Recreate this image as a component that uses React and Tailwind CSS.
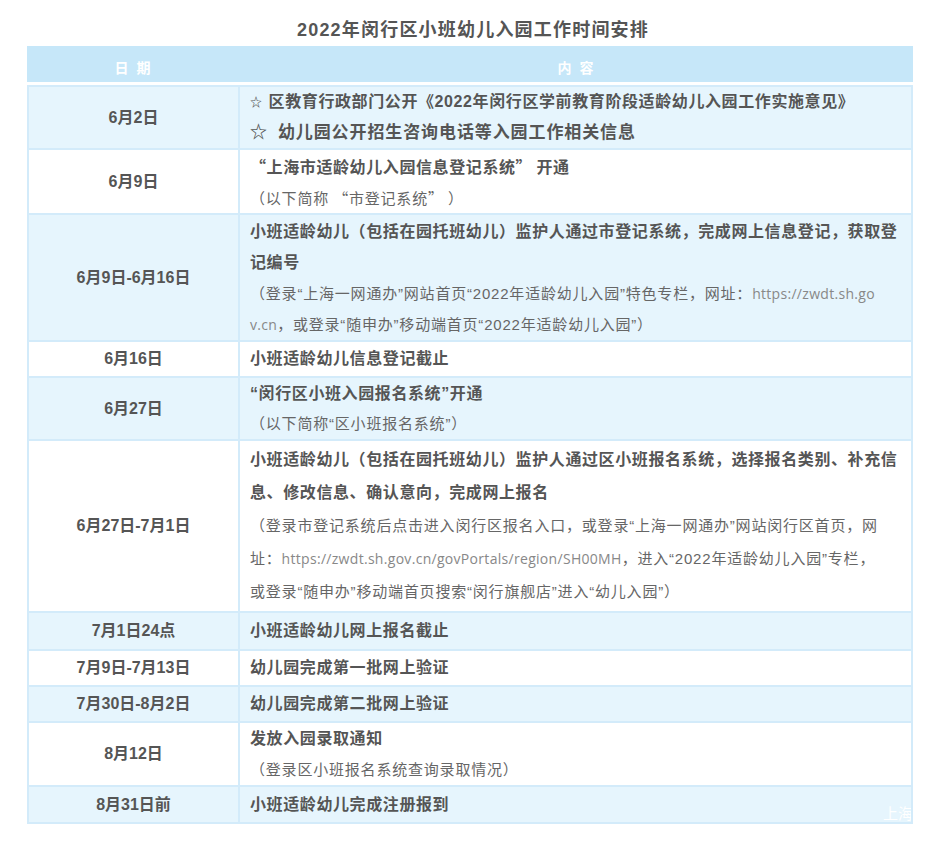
import React from "react";

const B = "font-bold text-[#555] text-[16px] tracking-[0.6px] whitespace-nowrap";
const N = "text-[#666] text-[15px] tracking-[0.8px] whitespace-nowrap";
const URL = "font-['Open_Sans'] text-[#888] text-[14px] tracking-[0.3px]";
const CJK = "font-['Noto_Sans_CJK_SC']";

function Row({ date, bg, pad, children, last }) {
  return (
    <div className={`relative grid grid-cols-[211px_1fr] border-b-2 border-[#d3ebfa] ${bg}`}>
      <div className="flex items-center justify-center border-r-2 border-[#d3ebfa] font-bold text-[16px] text-[#555]">
        {date}
      </div>
      <div className={`pl-[10px] pr-[6px] overflow-hidden relative ${pad}`}>
        {children}
        {last && (
          <span className="absolute left-[643px] bottom-[-2px] text-white text-[15px] leading-[20px] whitespace-nowrap">
            上海闵行
          </span>
        )}
      </div>
    </div>
  );
}

export default function App() {
  const light = "bg-[#e6f5fd]";
  const white = "bg-white";
  return (
    <div className="w-[944px] min-h-[846px] bg-white font-['Liberation_Sans','Noto_Sans_CJK_SC',sans-serif]">
      {/* title */}
      <h1 className="pt-[19px] h-[46px] text-center text-[18px] leading-[22px] font-bold text-[#555] tracking-[1.2px] pl-[2px]">
        2022年闵行区小班幼儿入园工作时间安排
      </h1>

      <div className="ml-[27px] w-[886px]">
        {/* header */}
        <div className="grid grid-cols-[213px_1fr] h-[36px] bg-[#c6e7f9] text-white font-bold text-[14px] leading-[20px]">
          <div className="pt-[12px] text-center tracking-[2px]">日&nbsp;期</div>
          <div className="pt-[12px] text-center tracking-[2px]">内&nbsp;容</div>
        </div>

        {/* body */}
        <div className="mt-[3px] border-x-2 border-t-2 border-[#d3ebfa]">
          <Row date="6月2日" bg={light} pad="leading-[30px]">
            <div className={B}>
              <span className="text-[12px] mr-[6px]">☆</span>区教育行政部门公开《2022年闵行区学前教育阶段适龄幼儿入园工作实施意见》
            </div>
            <div className="font-bold text-[#555] text-[17px] tracking-[0.9px] whitespace-nowrap">
              <span className="mr-[10px]">☆</span>幼儿园公开招生咨询电话等入园工作相关信息
            </div>
          </Row>

          <Row date="6月9日" bg={white} pad="leading-[31px] pt-[1px]">
            <div className={`${B} ${CJK}`}>“上海市适龄幼儿入园信息登记系统” 开通</div>
            <div className={`${N} ${CJK}`}>（以下简称 “市登记系统” ）</div>
          </Row>

          <Row date="6月9日-6月16日" bg={light} pad="leading-[31px] pt-[1px]">
            <div className={B}>小班适龄幼儿（包括在园托班幼儿）监护人通过市登记系统，完成网上信息登记，获取登</div>
            <div className={B}>记编号</div>
            <div className={N}>
              （登录“上海一网通办”网站首页“2022年适龄幼儿入园”特色专栏，网址：<span className={URL}>https://zwdt.sh.go</span>
            </div>
            <div className={N}>
              <span className={URL}>v.cn</span>，或登录“随申办”移动端首页“2022年适龄幼儿入园”）
            </div>
          </Row>

          <Row date="6月16日" bg={white} pad="leading-[30px] py-[2px]">
            <div className={B}>小班适龄幼儿信息登记截止</div>
          </Row>

          <Row date="6月27日" bg={light} pad="leading-[30px] pt-[1px]">
            <div className={B}>“闵行区小班入园报名系统”开通</div>
            <div className={N}>（以下简称“区小班报名系统”）</div>
          </Row>

          <Row date="6月27日-7月1日" bg={white} pad="leading-[33px] pt-[2px] pb-[3px]">
            <div className={B}>小班适龄幼儿（包括在园托班幼儿）监护人通过区小班报名系统，选择报名类别、补充信</div>
            <div className={B}>息、修改信息、确认意向，完成网上报名</div>
            <div className={N}>（登录市登记系统后点击进入闵行区报名入口，或登录“上海一网通办”网站闵行区首页，网</div>
            <div className={N}>
              址：<span className={URL}>https://zwdt.sh.gov.cn/govPortals/region/SH00MH</span>，进入“2022年适龄幼儿入园”专栏，
            </div>
            <div className={N}>或登录“随申办”移动端首页搜索“闵行旗舰店”进入“幼儿入园”）</div>
          </Row>

          <Row date="7月1日24点" bg={light} pad="leading-[32px] py-[2px]">
            <div className={B}>小班适龄幼儿网上报名截止</div>
          </Row>

          <Row date="7月9日-7月13日" bg={white} pad="leading-[30px] py-[2px]">
            <div className={B}>幼儿园完成第一批网上验证</div>
          </Row>

          <Row date="7月30日-8月2日" bg={light} pad="leading-[30px] py-[2px]">
            <div className={B}>幼儿园完成第二批网上验证</div>
          </Row>

          <Row date="8月12日" bg={white} pad="leading-[31px]">
            <div className={B}>发放入园录取通知</div>
            <div className={N}>（登录区小班报名系统查询录取情况）</div>
          </Row>

          <Row date="8月31日前" bg={light} pad="leading-[31px] py-[2px]" last>
            <div className={B}>小班适龄幼儿完成注册报到</div>
          </Row>
        </div>
      </div>
    </div>
  );
}
